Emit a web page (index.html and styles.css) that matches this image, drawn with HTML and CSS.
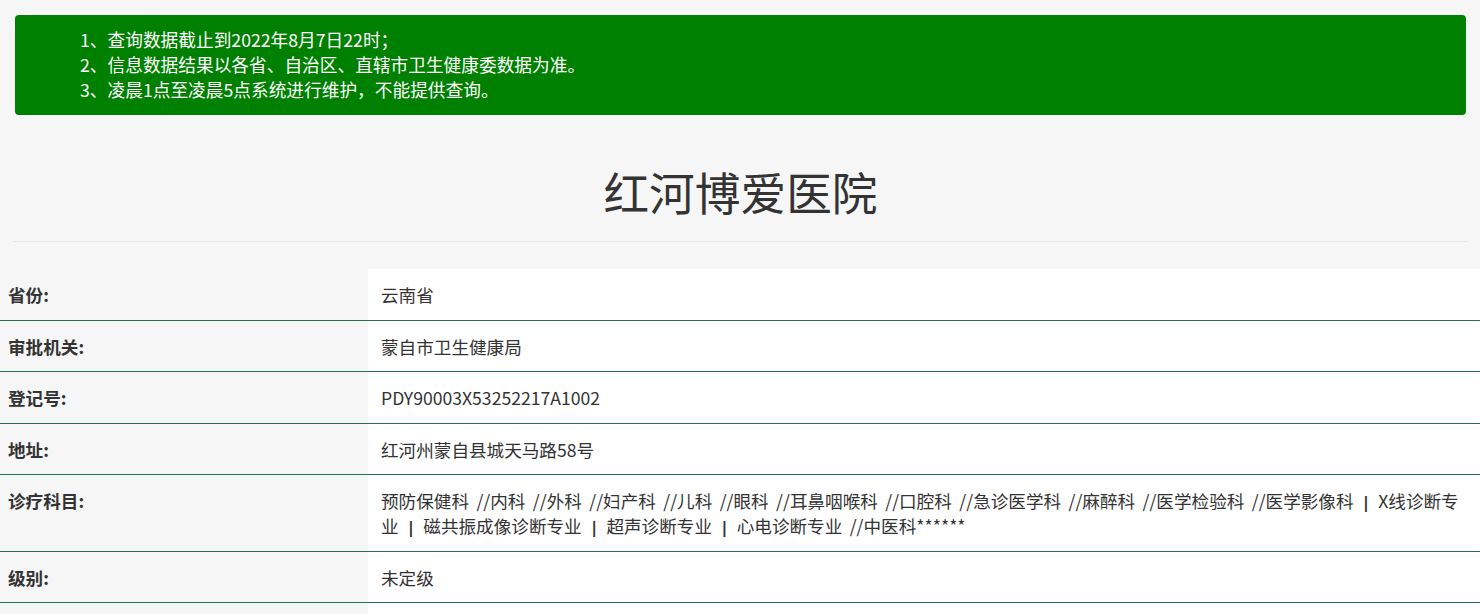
FILE: index.html
```html
<!DOCTYPE html>
<html lang="zh-CN">
<head>
<meta charset="utf-8">
<title>红河博爱医院</title>
<link rel="stylesheet" href="styles.css">
</head>
<body>
<div class="wrap">
  <div class="notice">
    <p>1、查询数据截止到2022年8月7日22时；</p>
    <p>2、信息数据结果以各省、自治区、直辖市卫生健康委数据为准。</p>
    <p>3、凌晨1点至凌晨5点系统进行维护，不能提供查询。</p>
  </div>
  <h1 class="title">红河博爱医院</h1>
  <hr class="sep">
</div>
<div class="info">
  <div class="row"><div class="label">省份:</div><div class="value">云南省</div></div>
  <div class="row"><div class="label">审批机关:</div><div class="value">蒙自市卫生健康局</div></div>
  <div class="row"><div class="label">登记号:</div><div class="value">PDY90003X53252217A1002</div></div>
  <div class="row"><div class="label">地址:</div><div class="value">红河州蒙自县城天马路58号</div></div>
  <div class="row"><div class="label">诊疗科目:</div><div class="value spaced">预防保健科 //内科 //外科 //妇产科 //儿科 //眼科 //耳鼻咽喉科 //口腔科 //急诊医学科 //麻醉科 //医学检验科 //医学影像科 <b class="pipe">|</b> X线诊断专业 <b class="pipe">|</b> 磁共振成像诊断专业 <b class="pipe">|</b> 超声诊断专业 <b class="pipe">|</b> 心电诊断专业 //中医科******</div></div>
  <div class="row"><div class="label">级别:</div><div class="value">未定级</div></div>
  <div class="row"><div class="label">&nbsp;</div><div class="value">&nbsp;</div></div>
</div>
</body>
</html>
```

FILE: styles.css
```css
html, body {
  margin: 0;
  padding: 0;
  background: #f6f6f6;
  color: #333;
  font-family: "Noto Sans CJK SC", "Microsoft YaHei", sans-serif;
}
.wrap {
  padding: 15px 14px 0 15px;
}
.notice {
  background: #008000;
  color: #fff;
  border-radius: 4px;
  padding: 12px 20px 13px 65px;
  font-size: 17.7px;
  line-height: 25px;
}
.notice p {
  margin: 0;
}
.title {
  margin: 46px 0 0;
  text-align: center;
  font-size: 45.7px;
  font-weight: normal;
  line-height: 60px;
  color: #333;
}
.sep {
  margin: 20px -2px 0;
  border: 0;
  border-top: 1px solid #e9e9e9;
  height: 0;
}
.info {
  margin-top: 27px;
}
.row {
  display: grid;
  grid-template-columns: 368px 1fr;
  border-bottom: 1px solid #23704a;
}
.label {
  padding: 13px 8px 12.5px;
  font-size: 17.6px;
  line-height: 25px;
  font-weight: bold;
  color: #333;
  background: #f6f6f6;
}
.value {
  padding: 13px 13px 12.5px;
  font-size: 17.6px;
  line-height: 25px;
  color: #333;
  background: #fff;
}
.spaced {
  word-spacing: 3.5px;
  line-break: anywhere;
}
.pipe {
  font-weight: bold;
  color: #333;
  font-family: "DejaVu Sans", sans-serif;
  font-size: 16px;
  line-height: 1;
  padding: 0 2px;
}
```
